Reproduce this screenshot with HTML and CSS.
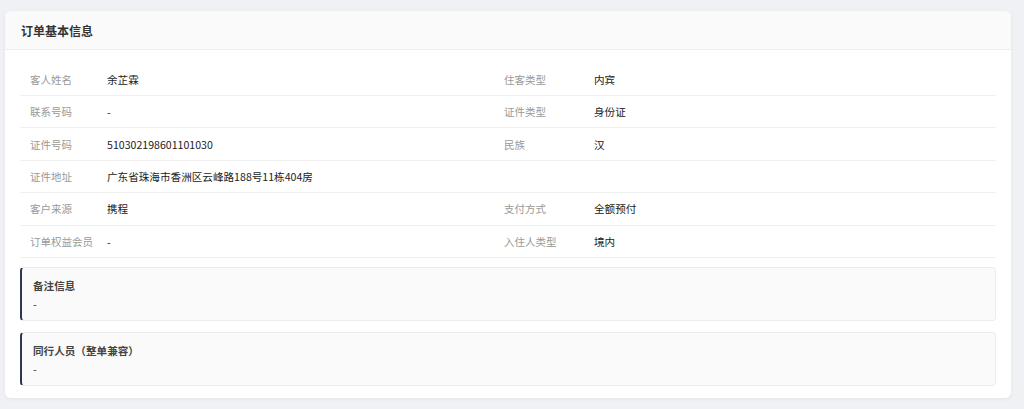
FILE: index.html
```html
<!DOCTYPE html>
<html lang="zh">
<head>
<meta charset="utf-8">
<link rel="stylesheet" href="styles.css">
</head>
<body>
<div class="card">
  <div class="card-head">订单基本信息</div>
  <div class="card-body">
    <div class="info">
      <div class="row"><span class="lbl">客人姓名</span><span class="val">余芷霖</span><span class="lbl">住客类型</span><span class="val">内宾</span></div>
      <div class="row"><span class="lbl">联系号码</span><span class="val">-</span><span class="lbl">证件类型</span><span class="val">身份证</span></div>
      <div class="row"><span class="lbl">证件号码</span><span class="val">510302198601101030</span><span class="lbl">民族</span><span class="val">汉</span></div>
      <div class="row"><span class="lbl">证件地址</span><span class="val">广东省珠海市香洲区云峰路188号11栋404房</span><span class="lbl"></span><span class="val"></span></div>
      <div class="row"><span class="lbl">客户来源</span><span class="val">携程</span><span class="lbl">支付方式</span><span class="val">全额预付</span></div>
      <div class="row"><span class="lbl">订单权益会员</span><span class="val">-</span><span class="lbl">入住人类型</span><span class="val">境内</span></div>
    </div>
    <div class="note">
      <div class="note-title">备注信息</div>
      <div class="note-text">-</div>
    </div>
    <div class="note">
      <div class="note-title">同行人员（整单兼容）</div>
      <div class="note-text">-</div>
    </div>
  </div>
</div>
</body>
</html>
```
FILE: styles.css
```css
html, body {
  margin: 0;
  padding: 0;
}
body {
  background: #f0f1f5;
  padding: 11px 13px 11px 5px;
  font-family: "Noto Sans CJK SC", "Noto Sans", sans-serif;
  color: #333;
  height: 409px;
  box-sizing: border-box;
}
.card {
  background: #fff;
  border-radius: 6px;
  box-shadow: 0 1px 4px rgba(0, 0, 0, 0.06);
  overflow: hidden;
}
.card-head {
  height: 39px;
  box-sizing: border-box;
  background: #fafafa;
  border-bottom: 1px solid #eeeeee;
  padding-left: 16px;
  font-size: 12px;
  font-weight: 700;
  line-height: 39px;
  color: #333;
}
.card-body {
  padding: 13.6px 15px 12px 15px;
}
.row {
  display: grid;
  grid-template-columns: 77px 397px 90px 1fr;
  padding-left: 10px;
  height: 32.4px;
  box-sizing: border-box;
  border-bottom: 1px solid #f0f0f0;
  align-items: center;
}
.lbl {
  font-size: 10.5px;
  color: #999;
}
.val {
  font-size: 10.6px;
  color: #222;
}
.note {
  margin-top: 9px;
  height: 54px;
  box-sizing: border-box;
  background: #fafafa;
  border: 1px solid #ececec;
  border-left: 2px solid #2c3554;
  border-radius: 4px;
  padding: 9px 11px;
}
.note + .note {
  margin-top: 11px;
}
.note-title {
  font-size: 10.6px;
  font-weight: 700;
  line-height: 18px;
  color: #444;
}
.note-text {
  font-size: 11px;
  line-height: 18px;
  color: #333;
}
```
